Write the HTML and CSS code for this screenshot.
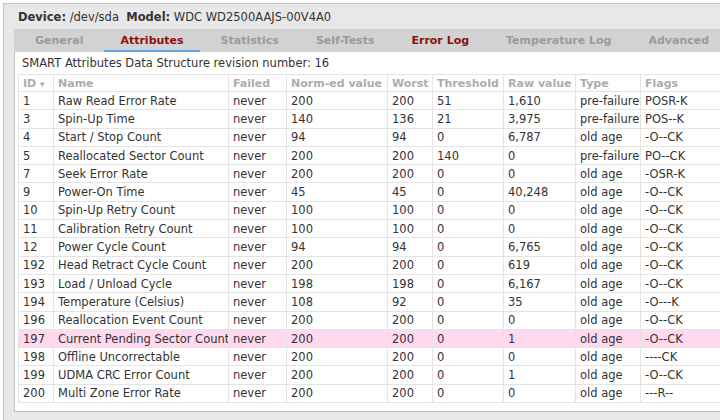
FILE: index.html
```html
<!DOCTYPE html>
<html>
<head>
<meta charset="utf-8">
<link rel="stylesheet" href="styles.css">
</head>
<body>
<div class="frame">
  <div class="device"><b>Device:</b> /dev/sda&nbsp; <b>Model:</b> WDC WD2500AAJS-00V4A0</div>
  <div class="tabs">
    <span class="tab">General</span>
    <span class="tab red active">Attributes</span>
    <span class="tab">Statistics</span>
    <span class="tab">Self-Tests</span>
    <span class="tab red">Error Log</span>
    <span class="tab">Temperature Log</span>
    <span class="tab">Advanced</span>
  </div>
  <div class="panel">
    <div class="rev">SMART Attributes Data Structure revision number: 16</div>
    <table class="attrs">
      <colgroup>
        <col class="c-id"><col class="c-name"><col class="c-failed"><col class="c-norm"><col class="c-worst"><col class="c-thr"><col class="c-raw"><col class="c-type"><col class="c-flags">
      </colgroup>
      <thead>
        <tr><th>ID <span class="arrow">▾</span></th><th>Name</th><th>Failed</th><th>Norm-ed value</th><th>Worst</th><th>Threshold</th><th>Raw value</th><th>Type</th><th>Flags</th></tr>
      </thead>
      <tbody>
        <tr><td>1</td><td>Raw Read Error Rate</td><td>never</td><td>200</td><td>200</td><td>51</td><td>1,610</td><td>pre-failure</td><td>POSR-K</td></tr>
        <tr><td>3</td><td>Spin-Up Time</td><td>never</td><td>140</td><td>136</td><td>21</td><td>3,975</td><td>pre-failure</td><td>POS--K</td></tr>
        <tr><td>4</td><td>Start / Stop Count</td><td>never</td><td>94</td><td>94</td><td>0</td><td>6,787</td><td>old age</td><td>-O--CK</td></tr>
        <tr><td>5</td><td>Reallocated Sector Count</td><td>never</td><td>200</td><td>200</td><td>140</td><td>0</td><td>pre-failure</td><td>PO--CK</td></tr>
        <tr><td>7</td><td>Seek Error Rate</td><td>never</td><td>200</td><td>200</td><td>0</td><td>0</td><td>old age</td><td>-OSR-K</td></tr>
        <tr><td>9</td><td>Power-On Time</td><td>never</td><td>45</td><td>45</td><td>0</td><td>40,248</td><td>old age</td><td>-O--CK</td></tr>
        <tr><td>10</td><td>Spin-Up Retry Count</td><td>never</td><td>100</td><td>100</td><td>0</td><td>0</td><td>old age</td><td>-O--CK</td></tr>
        <tr><td>11</td><td>Calibration Retry Count</td><td>never</td><td>100</td><td>100</td><td>0</td><td>0</td><td>old age</td><td>-O--CK</td></tr>
        <tr><td>12</td><td>Power Cycle Count</td><td>never</td><td>94</td><td>94</td><td>0</td><td>6,765</td><td>old age</td><td>-O--CK</td></tr>
        <tr><td>192</td><td>Head Retract Cycle Count</td><td>never</td><td>200</td><td>200</td><td>0</td><td>619</td><td>old age</td><td>-O--CK</td></tr>
        <tr><td>193</td><td>Load / Unload Cycle</td><td>never</td><td>198</td><td>198</td><td>0</td><td>6,167</td><td>old age</td><td>-O--CK</td></tr>
        <tr><td>194</td><td>Temperature (Celsius)</td><td>never</td><td>108</td><td>92</td><td>0</td><td>35</td><td>old age</td><td>-O---K</td></tr>
        <tr><td>196</td><td>Reallocation Event Count</td><td>never</td><td>200</td><td>200</td><td>0</td><td>0</td><td>old age</td><td>-O--CK</td></tr>
        <tr class="warn"><td>197</td><td>Current Pending Sector Count</td><td>never</td><td>200</td><td>200</td><td>0</td><td>1</td><td>old age</td><td>-O--CK</td></tr>
        <tr><td>198</td><td>Offline Uncorrectable</td><td>never</td><td>200</td><td>200</td><td>0</td><td>0</td><td>old age</td><td>----CK</td></tr>
        <tr><td>199</td><td>UDMA CRC Error Count</td><td>never</td><td>200</td><td>200</td><td>0</td><td>1</td><td>old age</td><td>-O--CK</td></tr>
        <tr><td>200</td><td>Multi Zone Error Rate</td><td>never</td><td>200</td><td>200</td><td>0</td><td>0</td><td>old age</td><td>---R--</td></tr>
      </tbody>
    </table>
  </div>
</div>
</body>
</html>
```
FILE: styles.css
```css
html, body {
  margin: 0;
  padding: 0;
  background: #ffffff;
  overflow: hidden;
  width: 720px;
  height: 420px;
}
body {
  font-family: "DejaVu Sans", Verdana, sans-serif;
  color: #222;
  padding: 3px 0 0 3px;
  box-sizing: border-box;
}
.frame {
  background: #e8e8e8;
  border-top: 1px solid #c6c6c6;
  border-left: 1px solid #c6c6c6;
  height: 417px;
  padding-left: 10px;
  box-sizing: border-box;
  overflow: hidden;
}
.device {
  font-size: 11.5px;
  color: #333;
  height: 25px;
  line-height: 27px;
  padding-left: 4px;
}
.tabs {
  display: flex;
  background: #d2d2d2;
  height: 23px;
  padding-left: 5px;
  gap: 5px;
  overflow: hidden;
}
.tab {
  flex: none;
  font-size: 11px;
  font-weight: bold;
  color: #9a9a9a;
  padding: 0 16px;
  line-height: 23px;
  border-bottom: 2px solid transparent;
  box-sizing: border-box;
  height: 23px;
}
.tab.red { color: #8c1010; }
.tab.active { border-bottom: 2px solid #62a8e6; }
.panel {
  background: #ffffff;
  border-left: 1px solid #c4c4c4;
  border-bottom: 1px solid #bdbdbd;
  height: 360px;
  padding-left: 3px;
  box-sizing: border-box;
  overflow: hidden;
}
.rev {
  font-size: 11.5px;
  color: #333;
  height: 22px;
  line-height: 22px;
  padding-left: 4px;
}
.attrs {
  border-collapse: collapse;
  table-layout: fixed;
  width: 820px;
  font-size: 11.5px;
  color: #333;
}
.c-id { width: 35px; }
.c-name { width: 175px; }
.c-failed { width: 58px; }
.c-norm { width: 101px; }
.c-worst { width: 45px; }
.c-thr { width: 71px; }
.c-raw { width: 72px; }
.c-type { width: 65px; }
.c-flags { width: 198px; }
.attrs th, .attrs td {
  border: 1px solid #e4e4e4;
  padding: 0 0 0 4px;
  text-align: left;
  white-space: nowrap;
  overflow: hidden;
}
.attrs th {
  font-size: 11px;
  font-weight: bold;
  color: #adadad;
  height: 16px;
}
.attrs td {
  height: 17.3px;
}
.arrow { font-size: 9px; color: #aaa; }
.attrs tr.warn td { background: #ffd9ee; }
```
